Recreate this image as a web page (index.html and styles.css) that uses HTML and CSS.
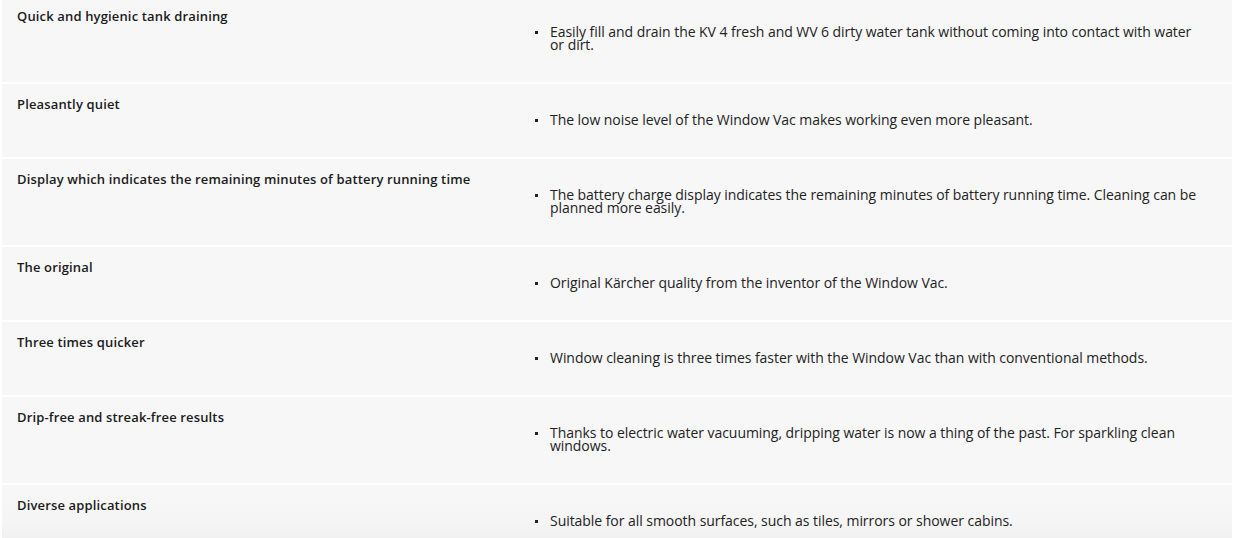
FILE: index.html
```html
<!DOCTYPE html>
<html lang="en">
<head>
<meta charset="utf-8">
<title>Features</title>
<link rel="stylesheet" href="styles.css">
</head>
<body>
<div class="features">
  <div class="row first">
    <div class="title">Quick and hygienic tank draining</div>
    <ul class="desc"><li>Easily fill and drain the KV 4 fresh and WV 6 dirty water tank without coming into contact with water or dirt.</li></ul>
  </div>
  <div class="row">
    <div class="title">Pleasantly quiet</div>
    <ul class="desc"><li>The low noise level of the Window Vac makes working even more pleasant.</li></ul>
  </div>
  <div class="row">
    <div class="title">Display which indicates the remaining minutes of battery running time</div>
    <ul class="desc"><li>The battery charge display indicates the remaining minutes of battery running time. Cleaning can be planned more easily.</li></ul>
  </div>
  <div class="row">
    <div class="title">The original</div>
    <ul class="desc"><li>Original Kärcher quality from the inventor of the Window Vac.</li></ul>
  </div>
  <div class="row">
    <div class="title">Three times quicker</div>
    <ul class="desc"><li>Window cleaning is three times faster with the Window Vac than with conventional methods.</li></ul>
  </div>
  <div class="row">
    <div class="title">Drip-free and streak-free results</div>
    <ul class="desc"><li>Thanks to electric water vacuuming, dripping water is now a thing of the past. For sparkling clean windows.</li></ul>
  </div>
  <div class="row last">
    <div class="title">Diverse applications</div>
    <ul class="desc"><li>Suitable for all smooth surfaces, such as tiles, mirrors or shower cabins.</li></ul>
  </div>
</div>
</body>
</html>
```
FILE: styles.css
```css
html, body {
  margin: 0;
  padding: 0;
  background: #ffffff;
  height: 538px;
  overflow: hidden;
}
.features {
  margin: -4px 4px 0 2px;
  display: flex;
  flex-direction: column;
  gap: 2px;
}
.row {
  display: grid;
  grid-template-columns: 518px 1fr;
  background: #f7f7f8;
}
.row.last {
  background: linear-gradient(to bottom, #f7f7f8 0%, #f5f5f5 50%, #ececec 100%);
}
.title {
  padding: 12px 15px 0 15px;
  font-family: "Open Sans", sans-serif;
  font-weight: 600;
  font-size: 13px;
  letter-spacing: 0.15px;
  line-height: 16px;
  color: #1b1b1b;
}
.desc {
  margin: 0;
  padding: 29px 29px 31px 30px;
  list-style: none;
  font-family: "Open Sans", sans-serif;
  font-size: 14px;
  letter-spacing: -0.05px;
  line-height: 13px;
  color: #222222;
}
.desc li {
  position: relative;
}
.desc li::before {
  content: "";
  position: absolute;
  left: -15px;
  top: 6px;
  width: 3px;
  height: 3px;
  background: #222222;
}
```
